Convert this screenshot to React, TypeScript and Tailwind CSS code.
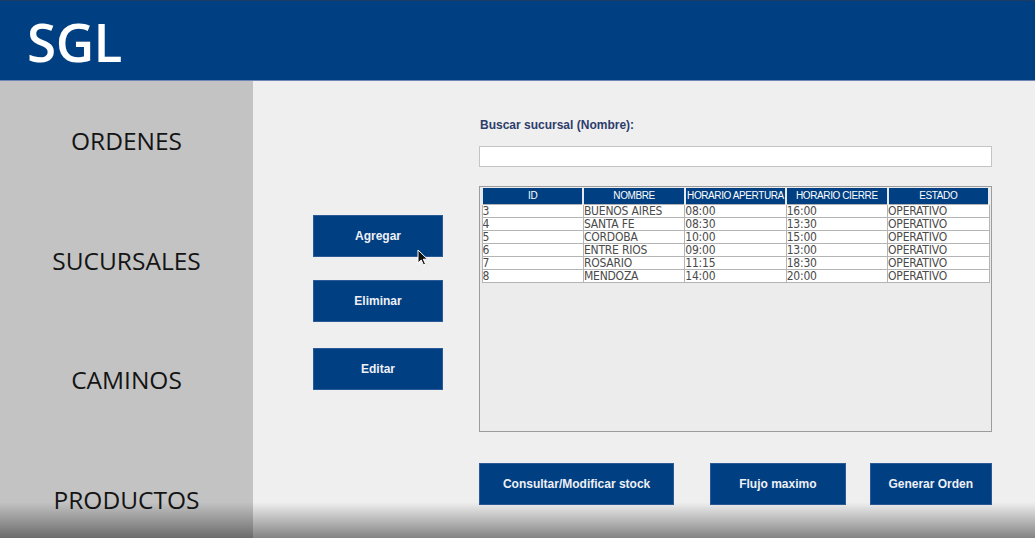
import React from "react";

const rows = [
  ["3", "BUENOS AIRES", "08:00", "16:00", "OPERATIVO"],
  ["4", "SANTA FE", "08:30", "13:30", "OPERATIVO"],
  ["5", "CORDOBA", "10:00", "15:00", "OPERATIVO"],
  ["6", "ENTRE RIOS", "09:00", "13:00", "OPERATIVO"],
  ["7", "ROSARIO", "11:15", "18:30", "OPERATIVO"],
  ["8", "MENDOZA", "14:00", "20:00", "OPERATIVO"],
];

const headers = ["ID", "NOMBRE", "HORARIO APERTURA", "HORARIO CIERRE", "ESTADO"];

const navItems = ["ORDENES", "SUCURSALES", "CAMINOS", "PRODUCTOS"];

const ActionButton = ({ label, className }: { label: string; className: string }) => (
  <button
    className={`h-[42px] bg-[#003f82] border border-[#2a5a98] text-[#eef0f6] text-[12px] font-bold font-['Liberation_Sans',sans-serif] ${className}`}
  >
    {label}
  </button>
);

export default function App() {
  return (
    <div className="relative w-full h-[538px] overflow-hidden flex flex-col bg-[#efefef] font-['Liberation_Sans',sans-serif]">
      {/* header */}
      <header className="h-[81px] shrink-0 bg-[#003f82] border-t border-[#1d3c66] border-b border-b-[#6f86b6] flex items-center pl-[27px]">
        <span className="text-white text-[53px] font-semibold leading-none font-['Open_Sans',sans-serif] tracking-[-0.5px] mt-[2px]">
          SGL
        </span>
      </header>

      <div className="flex flex-1 min-h-0">
        {/* sidebar */}
        <nav className="w-[253px] shrink-0 bg-[#c3c3c3] flex flex-col pt-[1px]">
          {navItems.map((item) => (
            <div
              key={item}
              className="h-[119.5px] shrink-0 flex items-center justify-center text-[24.5px] font-medium text-[#141414] font-['Open_Sans',sans-serif]"
            >
              {item}
            </div>
          ))}
        </nav>

        {/* main */}
        <main className="flex-1 flex pl-[60px]">
          <div className="w-[130px] shrink-0 flex flex-col pt-[134px]">
            <ActionButton label="Agregar" className="w-[130px]" />
            <ActionButton label="Eliminar" className="w-[130px] mt-[23px]" />
            <ActionButton label="Editar" className="w-[130px] mt-[26px]" />
          </div>

          <div className="w-[513px] ml-[36px] flex flex-col pt-[37px]">
            <label className="text-[12px] font-bold text-[#2d3d6c] leading-[15px] pl-[1px]">
              Buscar sucursal (Nombre):
            </label>
            <input
              type="text"
              className="mt-[13px] h-[21px] w-full bg-white border border-[#c4c4c4] outline-none"
            />

            <div className="mt-[19px] h-[246px] border border-[#9c9c9c] bg-[#ececec] px-px pt-px">
              <table className="w-full table-fixed border-collapse">
                <thead>
                  <tr>
                    {headers.map((h) => (
                      <th
                        key={h}
                        className="h-[16px] p-0 bg-[#003f82] border-x-2 border-[#e4e9f2] text-white text-[10px] font-normal leading-[14px] tracking-[-0.4px] whitespace-nowrap overflow-hidden"
                      >
                        {h}
                      </th>
                    ))}
                  </tr>
                </thead>
                <tbody>
                  {rows.map((r) => (
                    <tr key={r[0]}>
                      {r.map((c, i) => (
                        <td
                          key={i}
                          className="h-[13px] p-0 bg-white border border-[#b4b4b4] text-[12px] leading-[12px] text-[#4a4a4a] whitespace-nowrap overflow-hidden font-['DejaVu_Sans_Condensed','DejaVu_Sans',sans-serif] tracking-[-0.2px]"
                        >
                          {c}
                        </td>
                      ))}
                    </tr>
                  ))}
                </tbody>
              </table>
            </div>

            <div className="mt-[31px] flex">
              <ActionButton label="Consultar/Modificar stock" className="w-[196px]" />
              <ActionButton label="Flujo maximo" className="w-[136px] ml-[36px]" />
              <ActionButton label="Generar Orden" className="w-[123px] ml-[24px]" />
            </div>
          </div>
        </main>
      </div>

      {/* mouse cursor */}
      <svg
        className="absolute left-[417px] top-[249px] pointer-events-none"
        width="12"
        height="17"
        viewBox="0 0 12 17"
      >
        <path
          d="M1 1 L1 14 L4.2 11 L6.5 16 L8.5 15 L6.3 10.2 L10.5 10.2 Z"
          fill="#111"
          stroke="#fff"
          strokeWidth="1"
        />
      </svg>

      {/* video overlay shading at the bottom */}
      <div className="absolute left-0 right-0 bottom-0 h-[36px] pointer-events-none bg-gradient-to-b from-transparent to-black/45" />
    </div>
  );
}
